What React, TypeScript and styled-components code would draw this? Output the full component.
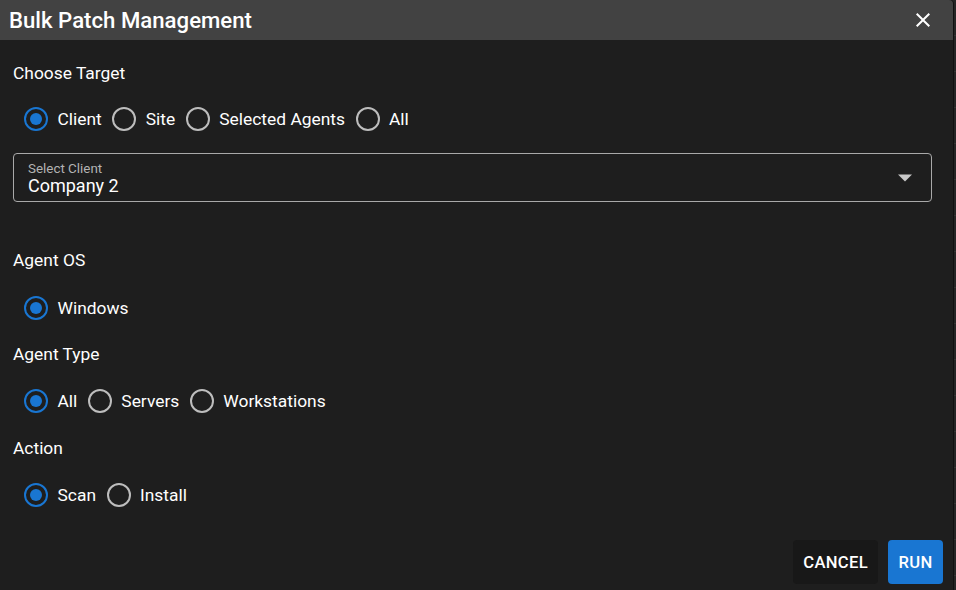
import React, { useState } from "react";
import styled, { createGlobalStyle } from "styled-components";

const Global = createGlobalStyle`
  html, body { margin: 0; padding: 0; }
  body {
    background: #262626;
    background-image: repeating-linear-gradient(to bottom, transparent 0 35px, #333 35px 36px);
    font-family: Roboto, "Noto Sans", "Liberation Sans", sans-serif;
    color: #fff;
    overflow: hidden;
  }
`;

const Dialog = styled.div`
  width: 953px;
  height: 590px;
  background: #1e1e1e;
  border-top-right-radius: 4px;
  box-shadow: 1px 0 0 #111;
  display: flex;
  flex-direction: column;
`;

const Header = styled.div`
  height: 40px;
  background: #424242;
  border-top-right-radius: 4px;
  display: flex;
  align-items: center;
  justify-content: space-between;
  padding: 0 18px 0 9px;
  box-sizing: border-box;
`;

const Title = styled.h2`
  margin: 0;
  font-size: 22.2px;
  font-weight: 500;
  line-height: 40px;
  color: #fff;
  letter-spacing: 0;
`;

const CloseButton = styled.button`
  width: 24px;
  height: 24px;
  padding: 0;
  border: none;
  background: transparent;
  color: #fff;
  display: flex;
  align-items: center;
  justify-content: center;
  cursor: pointer;
`;

const Body = styled.div`
  flex: 1;
  display: flex;
  flex-direction: column;
  padding: 21px 21px 0 13px;
`;

const SectionLabel = styled.div<{ $top?: number }>`
  font-size: 17.4px;
  line-height: 24px;
  height: 24px;
  margin-top: ${(p) => p.$top ?? 0}px;
`;

const RadioRow = styled.div<{ $top?: number }>`
  display: flex;
  align-items: center;
  height: 42px;
  margin-top: ${(p) => p.$top ?? 14}px;
  padding-left: 11px;
`;

const Option = styled.label`
  display: flex;
  align-items: center;
  gap: 9.5px;
  margin-right: 10.5px;
  font-size: 17.4px;
  line-height: 24px;
  cursor: pointer;
`;

const Ring = styled.span<{ $checked: boolean }>`
  width: 24px;
  height: 24px;
  box-sizing: border-box;
  border-radius: 50%;
  border: 2.4px solid ${(p) => (p.$checked ? "#1976d2" : "#bdbdbd")};
  display: flex;
  align-items: center;
  justify-content: center;
  flex-shrink: 0;
  &::after {
    content: "";
    width: 12px;
    height: 12px;
    border-radius: 50%;
    background: #1976d2;
    display: ${(p) => (p.$checked ? "block" : "none")};
  }
`;

const SelectBox = styled.div`
  margin-top: 13px;
  height: 49px;
  box-sizing: border-box;
  border: 1px solid #a9a9a9;
  border-radius: 4px;
  display: flex;
  align-items: center;
  justify-content: space-between;
  padding: 0 18px 0 14px;
`;

const SelectText = styled.div`
  display: flex;
  flex-direction: column;
  padding-top: 1px;
`;

const SelectLabel = styled.span`
  font-size: 13.4px;
  line-height: 15px;
  color: #b3b3b3;
`;

const SelectValue = styled.span`
  font-size: 18px;
  line-height: 20px;
  color: #fff;
`;

const Actions = styled.div`
  margin-top: auto;
  display: flex;
  justify-content: flex-end;
  gap: 10px;
  padding: 0 10px 6px 0;
  margin-right: -21px;
`;

const Button = styled.button<{ $primary?: boolean }>`
  height: 44px;
  padding: 0 10px;
  border: none;
  border-radius: 4px;
  background: ${(p) => (p.$primary ? "#1976d2" : "#181818")};
  color: #fff;
  font-family: Roboto, "Noto Sans", sans-serif;
  font-size: 16.6px;
  font-weight: 500;
  letter-spacing: 0.02em;
  text-transform: uppercase;
  cursor: pointer;
  min-width: 55px;
`;

function Radios({
  options,
  value,
  onChange,
  top,
}: {
  options: string[];
  value: string;
  onChange: (v: string) => void;
  top?: number;
}) {
  return (
    <RadioRow $top={top}>
      {options.map((o) => (
        <Option key={o} onClick={() => onChange(o)}>
          <Ring $checked={o === value} />
          {o}
        </Option>
      ))}
    </RadioRow>
  );
}

export default function App() {
  const [target, setTarget] = useState("Client");
  const [os, setOs] = useState("Windows");
  const [type, setType] = useState("All");
  const [action, setAction] = useState("Scan");

  return (
    <>
      <Global />
      <Dialog>
        <Header>
          <Title>Bulk Patch Management</Title>
          <CloseButton aria-label="close">
            <svg width="24" height="24" viewBox="0 0 24 24" fill="#fff">
              <path d="M19 6.41 17.59 5 12 10.59 6.41 5 5 6.41 10.59 12 5 17.59 6.41 19 12 13.41 17.59 19 19 17.59 13.41 12z" />
            </svg>
          </CloseButton>
        </Header>
        <Body>
          <SectionLabel>Choose Target</SectionLabel>
          <Radios
            options={["Client", "Site", "Selected Agents", "All"]}
            value={target}
            onChange={setTarget}
            top={13}
          />
          <SelectBox>
            <SelectText>
              <SelectLabel>Select Client</SelectLabel>
              <SelectValue>Company 2</SelectValue>
            </SelectText>
            <svg width="16" height="8" viewBox="0 0 16 8">
              <path d="M1 0.5 L15 0.5 L8 7.5 Z" fill="#c8c8c8" />
            </svg>
          </SelectBox>
          <SectionLabel $top={46}>Agent OS</SectionLabel>
          <Radios options={["Windows"]} value={os} onChange={setOs} top={15} />
          <SectionLabel $top={13}>Agent Type</SectionLabel>
          <Radios
            options={["All", "Servers", "Workstations"]}
            value={type}
            onChange={setType}
          />
          <SectionLabel $top={14}>Action</SectionLabel>
          <Radios options={["Scan", "Install"]} value={action} onChange={setAction} />
          <Actions>
            <Button>Cancel</Button>
            <Button $primary>Run</Button>
          </Actions>
        </Body>
      </Dialog>
    </>
  );
}
